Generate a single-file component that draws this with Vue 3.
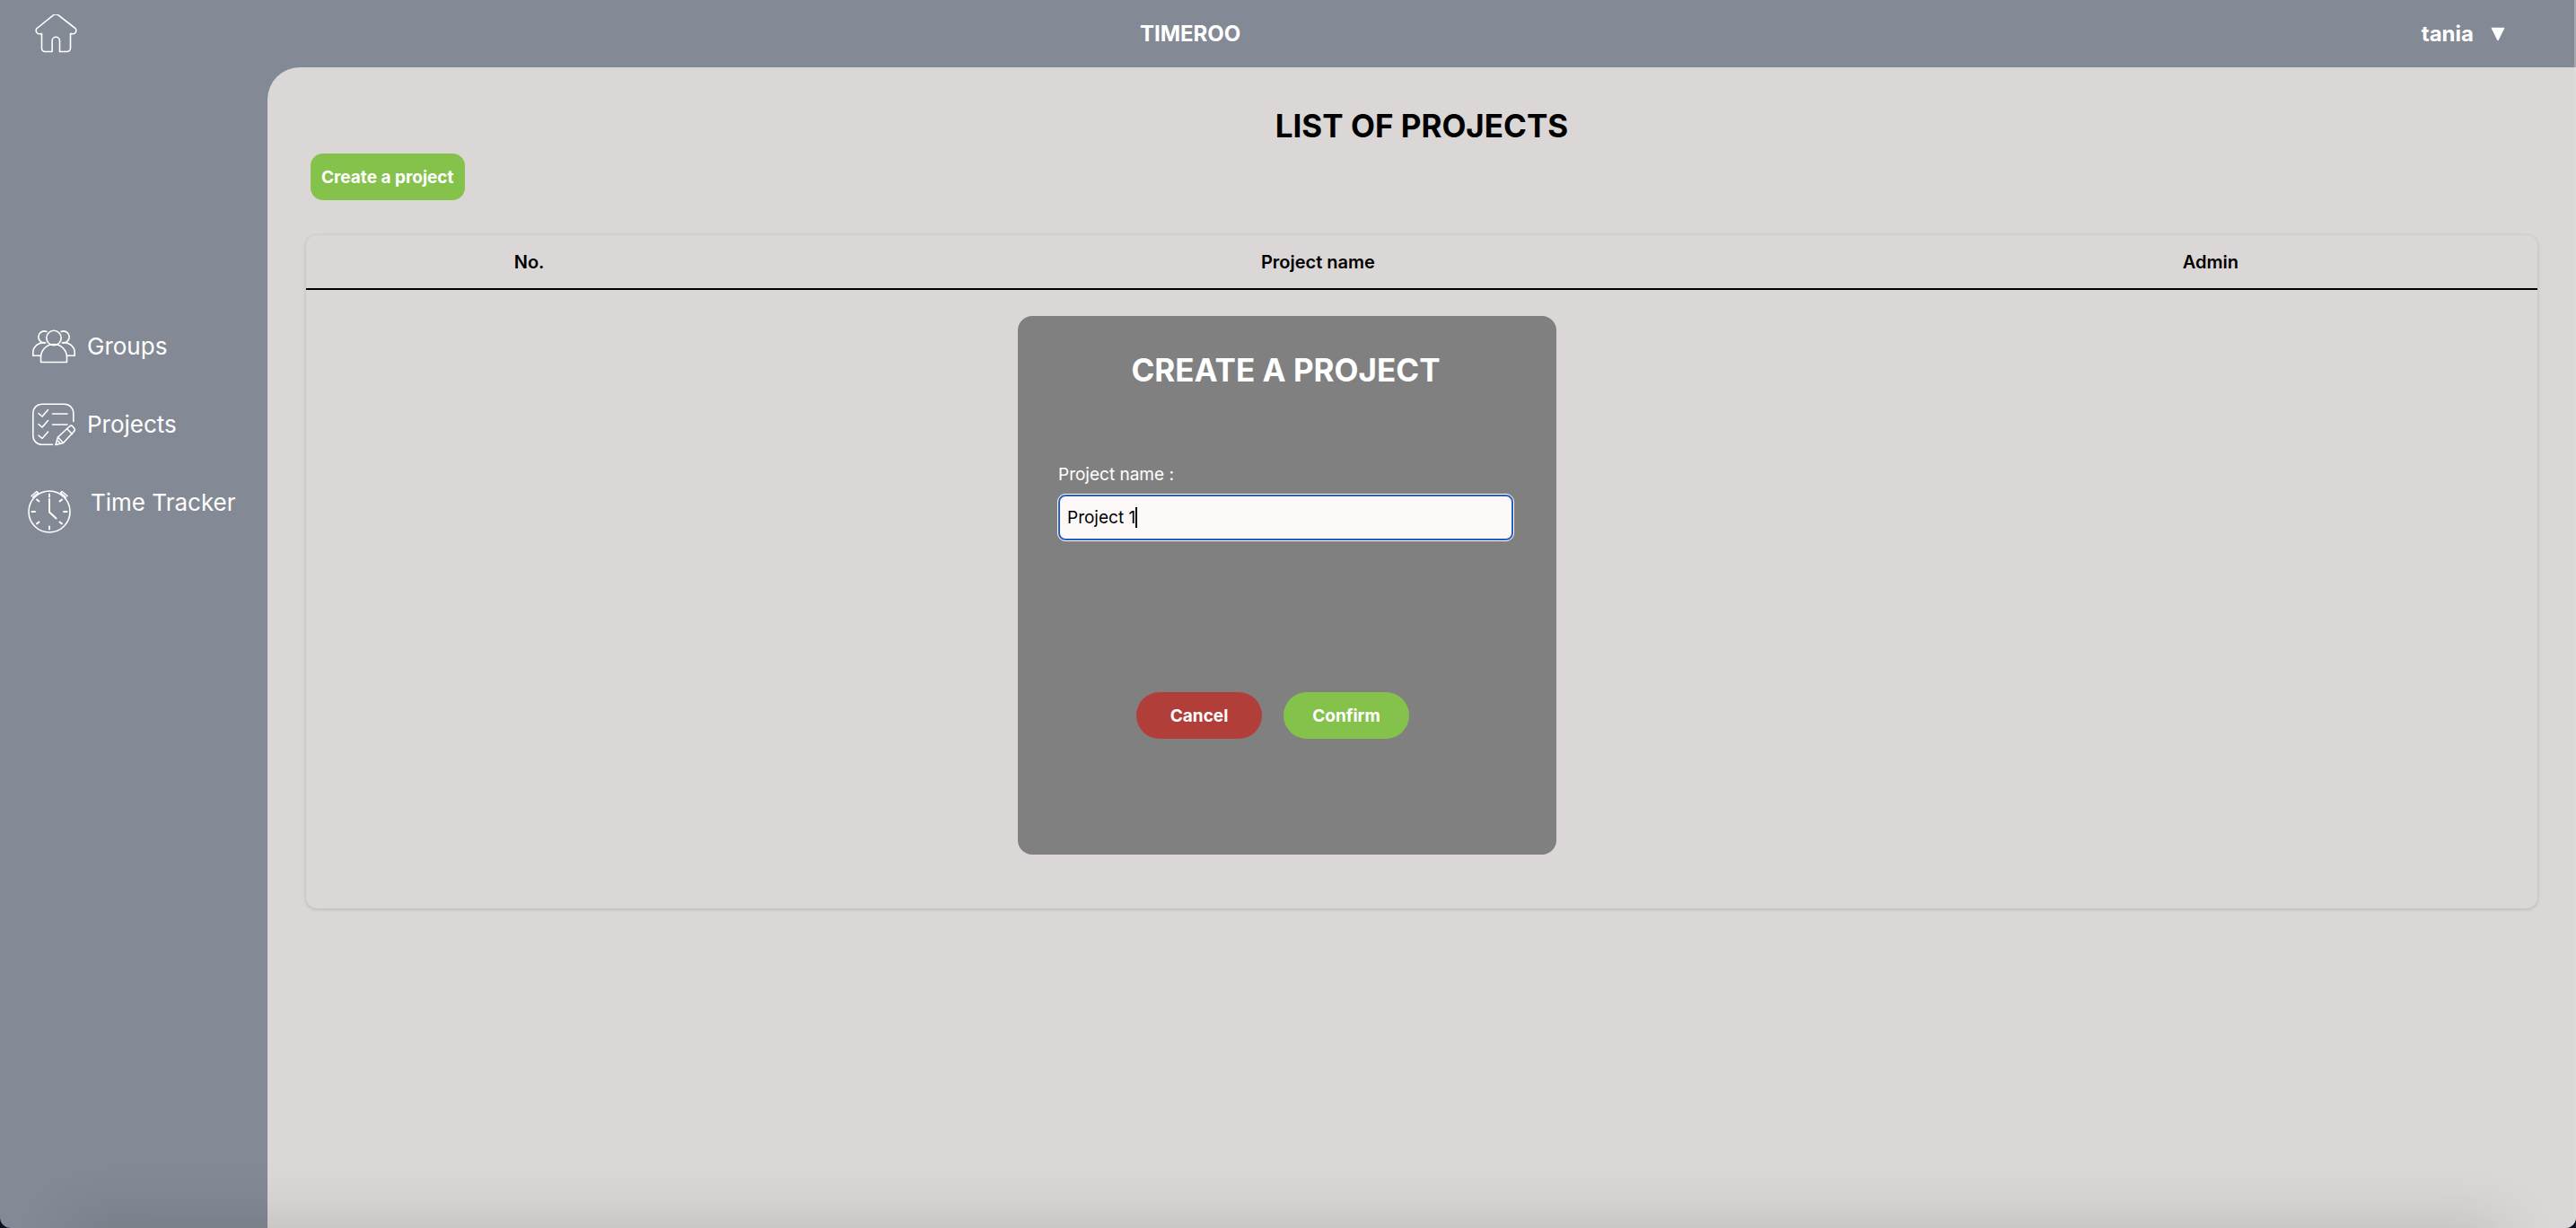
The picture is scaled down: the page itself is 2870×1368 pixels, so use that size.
<script setup>
import { ref } from 'vue'

const user = ref('tania')
const projectName = ref('Project 1')
const columns = [
  { key: 'no', label: 'No.' },
  { key: 'name', label: 'Project name' },
  { key: 'admin', label: 'Admin' },
]
</script>

<template>
  <div class="app">
    <header class="topbar">
      <a class="home" href="#" aria-label="Home">
        <svg viewBox="0 0 48 48" width="48" height="48">
          <path d="M7.500 21.500h-1A3.800 3.800 0 0 1 3.500 14.500L19.500 1.700a5.500 5.500 0 0 1 7.500 0L43.500 14.500a3.800 3.800 0 0 1-3 7H39.500v16a4 4 0 0 1-4 4h-8V29.500a4.200 4.200 0 0 0-8.400 0V41.500h-8a3.600 3.600 0 0 1-3.600-3.600z" />
        </svg>
      </a>
      <span class="brand">TIMEROO</span>
      <button class="user" type="button">
        <span>{{ user }}</span>
        <svg viewBox="0 0 16 16" width="16" height="16"><path d="M1.500 1.500h13L8 14.500z" /></svg>
      </button>
    </header>

    <div class="body">
      <nav class="sidebar">
        <a class="item" href="#">
          <svg viewBox="0 0 48 48" width="48" height="48">
            <g>
              <circle cx="24" cy="14.500" r="8.200" />
              <path d="M9.500 41.500V36a14.500 14.500 0 0 1 29 0v5.500z" />
              <path d="M16 7.500a6.500 6.500 0 1 0-1.500 12.300" />
              <path d="M14.500 19.800C7 18.500.800 24.500.800 30.500v3.800h8.500" />
              <path d="M32 7.500a6.500 6.500 0 1 1 1.500 12.300" />
              <path d="M33.500 19.800c7.500-1.300 13.700 4.700 13.700 10.700v3.800h-8.500" />
            </g>
          </svg>
          <span>Groups</span>
        </a>
        <a class="item" href="#">
          <svg viewBox="0 0 48 48" width="48" height="48">
            <path d="M22.500 46.300H10.500A9.700 9.700 0 0 1 .800 36.500V11A9.800 9.800 0 0 1 10.500 1.200H36A9.800 9.800 0 0 1 45.800 11v9.500" />
            <path d="M22.500 12h16.500M22.500 24h16.500" />
            <path d="M7 11.500l4 3.500L17.500 7.500M7 23.500l4 3.500 6.500-7.500M7 36l4 3.500 6.500-7.500" />
            <path d="M26 46.500l2.500-8.500L41.500 26a2.500 2.500 0 0 1 3.500 0l1.500 2a2.500 2.500 0 0 1 0 3.500L34.500 44.500zM28.500 38l6 6.500M38.500 28.500l6 6M29 42.500l1.500 2" />
          </svg>
          <span>Projects</span>
        </a>
        <a class="item item-tracker" href="#">
          <svg viewBox="0 0 48 48" width="48" height="48">
            <circle cx="24" cy="24" r="23" />
            <path class="hand" d="M24 10v14.500l7.500 7" />
            <path class="hand" d="M24 4.500v3M24 40.500v3M4.500 24h3.500M40 24h3.500M10 10.500l2.500 2M38 10.500l-2.500 2M10 37.500l2.500-2M38 37.500l-2.500-2" />
            <path d="M4 6.500L10 1.500l1.500 1.500M5.500 8l6-5M44 6.500L38 1.500 36.500 3M42.500 8l-6-5" />
          </svg>
          <span>Time Tracker</span>
        </a>
      </nav>

      <main class="content">
        <h1 class="title">LIST OF PROJECTS</h1>
        <button class="btn create" type="button">Create a project</button>
        <section class="card">
          <table class="projects">
            <thead>
              <tr>
                <th v-for="c in columns" :key="c.key" :class="c.key" scope="col">{{ c.label }}</th>
              </tr>
            </thead>
            <tbody></tbody>
          </table>
        </section>
      </main>
    </div>

    <div class="overlay">
      <form class="modal" role="dialog" aria-labelledby="modal-title" @submit.prevent>
        <h2 id="modal-title" class="modal-title">CREATE A PROJECT</h2>
        <label class="label" for="project-name">Project name :</label>
        <div class="field">
          <input id="project-name" v-model="projectName" type="text" />
          <i class="caret"></i>
        </div>
        <div class="actions">
          <button class="btn pill cancel" type="button">Cancel</button>
          <button class="btn pill confirm" type="submit">Confirm</button>
        </div>
      </form>
    </div>

    <div class="window-edge"></div>
  </div>
</template>

<style>
html,
body {
  background: #0b1020;
}
</style>

<style scoped>
* {
  box-sizing: border-box;
}

.app {
  position: relative;
  display: flex;
  flex-direction: column;
  min-height: 100vh;
  overflow: hidden;
  border-radius: 0 0 12px 12px;
  background: #848a95;
  color: #000;
  font-family: Inter, "Liberation Sans", sans-serif;
  font-size: 19px;
}

svg {
  display: block;
  flex: none;
  fill: none;
  stroke: #fff;
  stroke-width: 1.6;
  stroke-linecap: round;
  stroke-linejoin: round;
}

.topbar {
  display: grid;
  grid-template-columns: 45.5% 1fr auto;
  align-items: center;
  height: 75px;
  padding-right: 79px;
  color: #fff;
  font-size: 24px;
  font-weight: 700;
}

.home {
  justify-self: start;
  margin-left: 39px;
  padding-top: 5px;
}

.user {
  display: flex;
  align-items: center;
  gap: 19px;
  padding: 0;
  border: 0;
  background: none;
  color: inherit;
  font: inherit;
}

.user svg {
  fill: #fff;
}

.body {
  display: flex;
  flex: 1;
}

.sidebar {
  display: flex;
  flex: none;
  flex-direction: column;
  gap: 43px;
  width: 298px;
  padding-top: 289px;
}

.item {
  display: flex;
  align-items: center;
  gap: 13px;
  height: 44px;
  padding-left: 36px;
  color: #fff;
  font-size: 26px;
  line-height: 44px;
  text-decoration: none;
}

.item-tracker {
  align-items: flex-start;
  gap: 22px;
  padding-left: 31px;
}

.item-tracker svg {
  margin-top: 8px;
}

.hand {
  stroke-width: 2;
}

.content {
  flex: 1;
  min-width: 0;
  padding: 43px 43px 0;
  border-top-left-radius: 36px;
  background: #dbd7d6;
}

.title,
.modal-title {
  margin: 0;
  font-size: 35px;
  font-weight: 700;
  line-height: 44px;
  text-align: center;
}

.btn {
  height: 52px;
  padding: 0 12px;
  border: 0;
  background: #85c24b;
  color: #fff;
  font-family: inherit;
  font-size: 19px;
  font-weight: 700;
}

.create {
  display: block;
  margin: 9px 0 39px 5px;
  border-radius: 14px;
}

.card {
  min-height: 750px;
  border-radius: 12px;
  box-shadow: 0 1px 4px rgba(0, 0, 0, 0.16);
}

.projects {
  width: 100%;
  border-collapse: separate;
  border-spacing: 0;
  table-layout: fixed;
}

.projects th {
  height: 61px;
  padding: 0;
  border-bottom: 2px solid #000;
  font-size: 20px;
  font-weight: 600;
}

.no {
  width: 20%;
}

.name {
  width: 50.7%;
}

.overlay {
  position: absolute;
  inset: 0 2px 64px 0;
  display: flex;
  align-items: center;
  justify-content: center;
}

.modal {
  width: 600px;
  height: 600px;
  padding: 38px 48px 0 45px;
  border-radius: 16px;
  background: #808080;
  color: #fff;
}

.label {
  display: block;
  margin-top: 83px;
  line-height: 24px;
}

.field {
  position: relative;
  margin-top: 10px;
}

.field input {
  display: block;
  width: 100%;
  height: 51px;
  padding: 0 8px;
  border: 2px solid #2a5dc4;
  border-radius: 8px;
  outline: 1px solid #fff;
  background: #fdf9f8;
  color: #000;
  font-family: inherit;
  font-size: 19px;
}

.caret {
  position: absolute;
  top: 14px;
  left: 86px;
  width: 2px;
  height: 23px;
  background: #000;
}

.actions {
  display: flex;
  gap: 24px;
  margin: 169px 0 0 87px;
}

.pill {
  width: 140px;
  border-radius: 26px;
}

.cancel {
  background: #b23e39;
}

.window-edge {
  position: absolute;
  inset: 0;
  overflow: hidden;
  border-right: 2px solid rgba(230, 225, 225, 0.35);
  border-radius: 0 0 12px 12px;
  pointer-events: none;
}

.window-edge::after {
  content: "";
  position: absolute;
  top: 100%;
  right: 80px;
  left: 80px;
  height: 60px;
  box-shadow: 0 0 70px rgba(0, 0, 0, 0.16);
}
</style>
